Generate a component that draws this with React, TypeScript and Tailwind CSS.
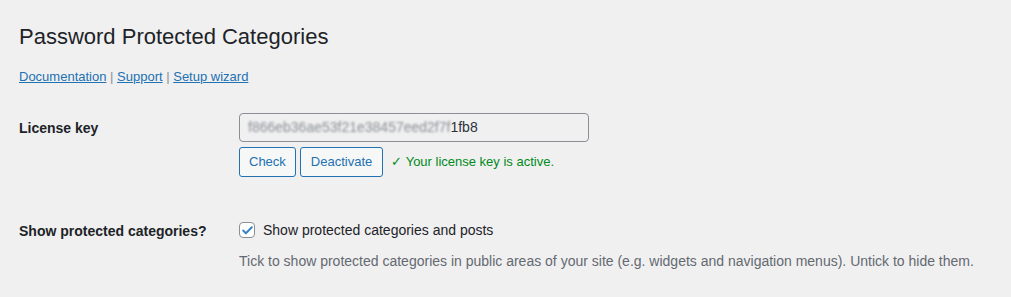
import { Check } from "lucide-react";

export default function App() {
  return (
    <div
      className="min-h-[297px] bg-[#f0f0f1] pl-[19px] pr-5 text-[14px] text-[#1d2327]"
      style={{ fontFamily: '"Liberation Sans", Arial, sans-serif' }}
    >
      {/* Header */}
      <h1 className="pt-[22px] text-[22px] leading-[29px] font-normal">Password Protected Categories</h1>
      <p className="mt-[16px] text-[13px] leading-[20px]">
        <a href="#" className="text-[#2271b1] underline">Documentation</a>
        <span className="text-[#8c8f94]"> | </span>
        <a href="#" className="text-[#2271b1] underline">Support</a>
        <span className="text-[#8c8f94]"> | </span>
        <a href="#" className="text-[#2271b1] underline">Setup wizard</a>
      </p>

      {/* Settings table */}
      <div className="mt-[26px] flex flex-col">
        <div className="flex">
          <div className="w-[220px] shrink-0 pt-[5px] font-semibold">License key</div>
          <div className="flex flex-col">
            <div className="flex h-[29px] w-[350px] items-center rounded-[4px] border border-[#8c8f94] bg-[#f0f0f1] px-[8px] text-[#2c3338]">
              <span className="blur-[1.3px] text-[#8c8f94]">f866eb36ae53f21e38457eed2f7f</span>
              <span>1fb8</span>
            </div>
            <div className="mt-[5px] flex items-center">
              <button className="h-[30px] rounded-[3px] border border-[#2271b1] bg-[#f6f7f7] px-[9px] text-[13px] text-[#2271b1]">
                Check
              </button>
              <button className="ml-[4px] h-[30px] rounded-[3px] border border-[#2271b1] bg-[#f6f7f7] px-[10px] text-[13px] text-[#2271b1]">
                Deactivate
              </button>
              <span className="ml-[8px] text-[13px] text-[#008a20]">✓ Your license key is active.</span>
            </div>
          </div>
        </div>

        <div className="mt-[44px] flex">
          <div className="w-[220px] shrink-0 pt-[1px] font-semibold leading-[18px]">Show protected categories?</div>
          <div className="flex flex-col">
            <label className="flex items-center">
              <span className="flex h-[16px] w-[16px] items-center justify-center rounded-[4px] border border-[#8c8f94] bg-white">
                <Check className="h-[13px] w-[13px] text-[#3582c4]" strokeWidth={3.5} />
              </span>
              <span className="ml-[8px] leading-[18px]">Show protected categories and posts</span>
            </label>
            <p className="mt-[13px] text-[#646970] leading-[18px]">
              Tick to show protected categories in public areas of your site (e.g. widgets and navigation menus). Untick to hide them.
            </p>
          </div>
        </div>
      </div>
    </div>
  );
}
